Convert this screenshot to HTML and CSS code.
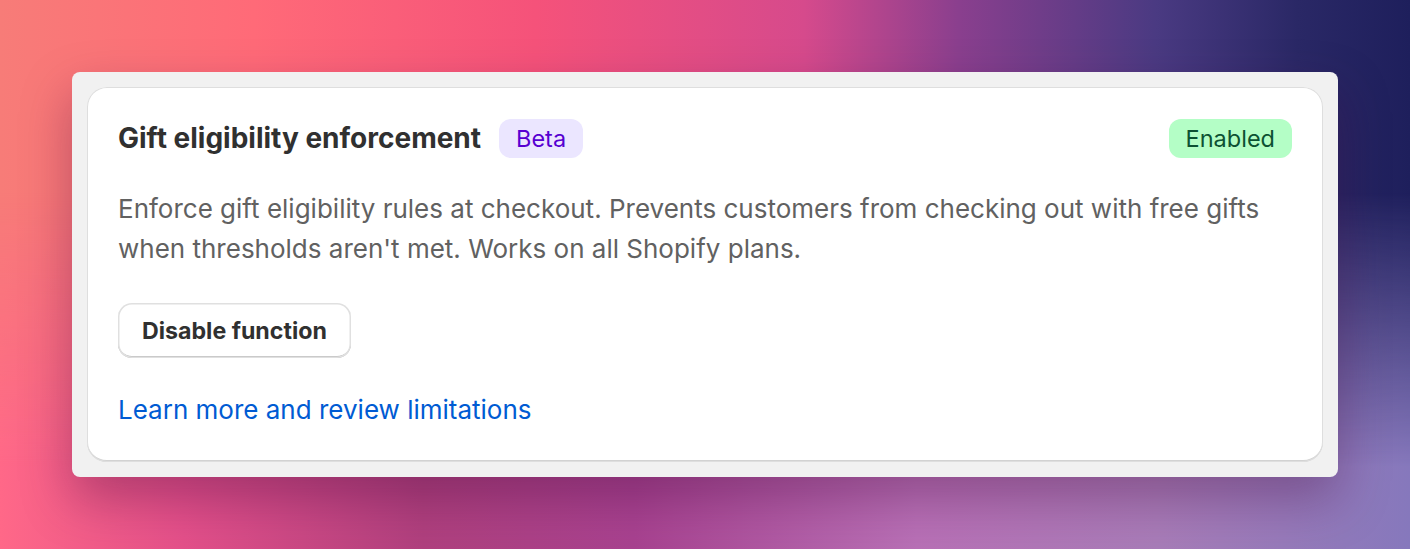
FILE: index.html
```html
<!DOCTYPE html>
<html lang="en">
<head>
<meta charset="utf-8">
<title>Gift eligibility enforcement</title>
<link rel="stylesheet" href="styles.css">
</head>
<body>
<div class="page">
  <div class="frame">
    <section class="card">
      <div class="head">
        <div class="title-group">
          <h2 class="title">Gift eligibility enforcement</h2>
          <span class="badge badge-beta">Beta</span>
        </div>
        <span class="badge badge-enabled">Enabled</span>
      </div>
      <p class="desc">Enforce gift eligibility rules at checkout. Prevents customers from checking out with free gifts when thresholds aren't met. Works on all Shopify plans.</p>
      <div class="actions">
        <button class="btn" type="button">Disable function</button>
      </div>
      <a class="link" href="#">Learn more and review limitations</a>
    </section>
  </div>
</div>
</body>
</html>
```
FILE: styles.css
```css
* { box-sizing: border-box; }
html, body { margin: 0; height: 100%; }
body {
  font-family: Inter, "Noto Sans", "Liberation Sans", sans-serif;
  background: linear-gradient(90deg, #f77c78 0%, #ff6a78 18%, #f5527a 38%, #d64a8c 57%, #8a3f8e 68%, #4a3a82 82%, #2a2866 92%, #1e1f5c 100%);
  overflow: hidden;
  position: relative;
}
body::before {
  content: "";
  position: fixed;
  inset: 0;
  background: linear-gradient(90deg, #ff6888 0%, #e4508a 13%, #b0407e 30%, #a84290 45%, #b870b6 65%, #a87cb8 82%, #8678bc 100%);
  -webkit-mask-image: linear-gradient(180deg, transparent 0%, transparent 35%, #000 85%, #000 100%);
  mask-image: linear-gradient(180deg, transparent 0%, transparent 35%, #000 85%, #000 100%);
  z-index: 0;
}
.page {
  position: relative;
  z-index: 1;
  padding: 72px;
}
.frame {
  background: #f1f1f1;
  border-radius: 8px;
  padding: 15px;
  box-shadow: 0 22px 50px rgba(70, 10, 60, 0.35);
}
.card {
  background: #fff;
  border-radius: 20px;
  padding: 31px 31px 32px;
  box-shadow: inset 0 0 0 1px #dedede, inset 0 -2px 0 #d2d2d2;
}
.head {
  display: flex;
  align-items: center;
  justify-content: space-between;
  height: 40px;
}
.title-group {
  display: flex;
  align-items: center;
  gap: 18px;
}
.title {
  margin: 0 0 1px;
  font-size: 28px;
  line-height: 32px;
  font-weight: 700;
  color: #303030;
}
.badge {
  display: inline-flex;
  align-items: center;
  height: 39px;
  padding: 0 17px;
  border-radius: 12px;
  font-size: 23.5px;
  font-weight: 400;
}
.badge-beta { background: #ebe6ff; color: #5700d1; }
.badge-enabled { background: #b4fec6; color: #0c5132; }
.desc {
  margin: 31px 0 0;
  font-size: 26px;
  line-height: 40px;
  color: #616161;
}
.actions { margin-top: 34px; }
.btn {
  font-family: inherit;
  font-size: 23.2px;
  font-weight: 700;
  color: #303030;
  background: #fff;
  height: 55px;
  padding: 0 24px;
  border: 0;
  border-radius: 14px;
  box-shadow: inset 0 0 0 1.5px #e0e0e0, inset 0 -2px 0 #b5b5b5;
}
.link {
  display: block;
  width: max-content;
  margin-top: 32px;
  font-size: 26px;
  line-height: 40px;
  color: #005bd3;
  text-decoration: none;
}
```
